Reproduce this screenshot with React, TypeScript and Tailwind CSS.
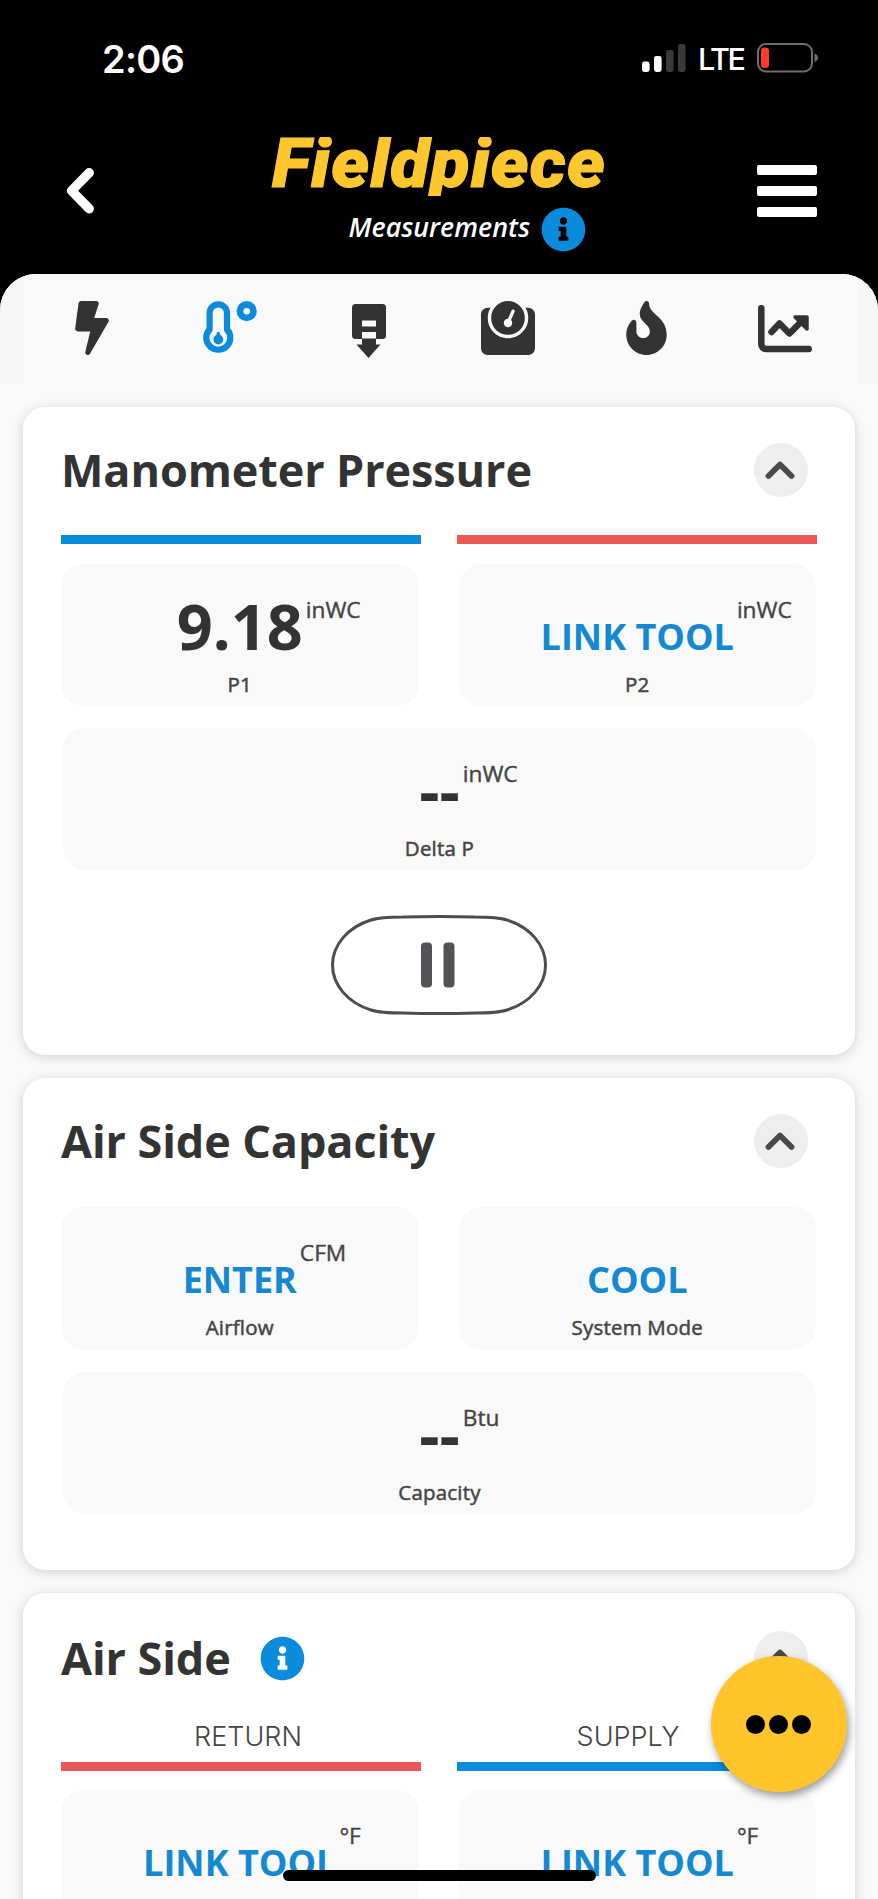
import type React from "react"

import { FaBolt, FaFire, FaInfoCircle, FaWeight } from "react-icons/fa"

interface Reading {
  label?: string
  value: string
  unit?: string
  action?: boolean
}

function StatusBar() {
  return (
    <div className="flex h-[116px] items-center justify-between pl-[102px] pr-[60px] text-white">
      <span className="pt-px font-['Inter',sans-serif] text-[38px] font-semibold leading-none tracking-[-0.8px]">2:06</span>
      <div className="flex items-center">
        <svg width="44" height="29" viewBox="0 0 44 29">
          <rect x="0" y="17.5" width="7.6" height="10.5" rx="2.4" fill="#fff" />
          <rect x="12" y="12" width="7.6" height="16" rx="2.4" fill="#fff" />
          <rect x="24" y="6" width="7.6" height="22" rx="2.4" fill="#3a3a3a" />
          <rect x="36" y="0" width="7.6" height="28" rx="2.4" fill="#3a3a3a" />
        </svg>
        <span className="ml-3 w-[59px] pt-0.5 font-['Inter',sans-serif] text-[30.5px] font-medium leading-none tracking-[-2.4px]">
          LTE
        </span>
        <svg width="61" height="30" viewBox="0 0 61 30">
          <rect x="1" y="1" width="54" height="27.5" rx="8" fill="none" stroke="#6e6e6e" strokeWidth="2" />
          <rect x="4" y="4.5" width="8" height="20.5" rx="3.5" fill="#ff3b30" />
          <path d="M57.5 10.5q3.5 1.5 3.5 4.3t-3.5 4.3z" fill="#6e6e6e" />
        </svg>
      </div>
    </div>
  )
}

function NavBar() {
  return (
    <div className="flex h-[158px] items-start">
      <button className="ml-[66px] mt-[51px]">
        <svg width="29" height="48" viewBox="0 0 29 48">
          <path d="M23.2 5.8 5.6 23.8l17.6 18" fill="none" stroke="#fff" strokeWidth="9.5" strokeLinecap="round" strokeLinejoin="round" />
        </svg>
      </button>
      <div className="ml-[174px] mt-[21px] w-[338px]">
        <svg width="338" height="58" viewBox="0 0 338 58" className="overflow-visible">
          <clipPath id="logo">
            <rect width="342" height="59" />
          </clipPath>
          <text
            x="3"
            y="49.5"
            textLength="334"
            lengthAdjust="spacingAndGlyphs"
            fill="#ffc72e"
            stroke="#ffc72e"
            strokeWidth="1"
            clipPath="url(#logo)"
            className="font-['Roboto',sans-serif] text-[68px] font-black italic tracking-[1px]"
          >
            Fieldpiece
          </text>
        </svg>
        <div className="mt-3 flex h-[45px] items-center justify-end pr-[21px]">
          <span className="pb-1 font-['Open_Sans',sans-serif] text-[26.8px] font-semibold italic leading-none text-white">
            Measurements
          </span>
          <FaInfoCircle className="ml-[11px] size-[45px] text-[#0a8bdc]" />
        </div>
      </div>
      <button className="ml-auto mr-[61px] mt-[49px] flex flex-col gap-[11px]">
        <span className="h-[10px] w-[60px] rounded-[2px] bg-white" />
        <span className="h-[10px] w-[60px] rounded-[2px] bg-white" />
        <span className="h-[10px] w-[60px] rounded-[2px] bg-white" />
      </button>
    </div>
  )
}

function ThermometerIcon() {
  return (
    <svg width="54" height="54" viewBox="0 0 54 54" fill="none" stroke="#0a8bdc">
      <path d="M6.6 12a8.7 8.7 0 0 1 17.4 0v16.5a12 12 0 1 1-17.4 0z" strokeWidth="6.2" />
      <path d="M15.3 32.5v6" strokeWidth="3.4" strokeLinecap="round" />
      <circle cx="15.3" cy="38.5" r="4.9" fill="#0a8bdc" stroke="none" />
      <circle cx="43.7" cy="10.2" r="6.7" strokeWidth="6.8" />
    </svg>
  )
}

function FilterIcon() {
  return (
    <svg width="34" height="54" viewBox="0 0 34 54" fill="#333">
      <path d="M3.5 0h27A3.5 3.5 0 0 1 34 3.5v28a3.5 3.5 0 0 1-3.5 3.5H24V16.5H10V35H3.5A3.5 3.5 0 0 1 0 31.5v-28A3.5 3.5 0 0 1 3.5 0z" />
      <rect x="10" y="22.5" width="14" height="5.5" />
      <path d="M10 34.5h14v6h4.5L16.5 54 4.5 40.5H10z" />
    </svg>
  )
}

function ChartIcon() {
  return (
    <svg width="54" height="48" viewBox="0 0 54 48" fill="none" stroke="#333" strokeWidth="6.5" strokeLinecap="round" strokeLinejoin="round">
      <path d="M3.3 3.3v36a4.7 4.7 0 0 0 4.7 4.7h42.7" />
      <path d="M13.5 27 21.5 18.5 31.5 28.5 43 17" />
      <path d="M37 12h12v12z" fill="#333" strokeWidth="3.5" />
    </svg>
  )
}

function TabBar() {
  return (
    <div className="bg-[#f6f6f6]">
      <div className="ml-6 mr-5 flex h-[110px] items-start bg-[#f9f9f9] pl-[51px] pt-[27px] text-[#333]">
        <FaBolt className="h-[54px] w-[34px]" />
        <div className="ml-[94px]">
          <ThermometerIcon />
        </div>
        <div className="ml-[95px] mt-[3px]">
          <FilterIcon />
        </div>
        <FaWeight className="ml-[95px] size-[54px]" />
        <FaFire className="ml-[91px] h-[54px] w-[41px]" />
        <div className="ml-[91px] mt-1">
          <ChartIcon />
        </div>
      </div>
    </div>
  )
}

function Card({ title, info, children }: { title: string; info?: boolean; children: React.ReactNode }) {
  return (
    <section className="mx-[23px] rounded-[22px] bg-white px-[38px] shadow-[0_2px_12px_rgba(0,0,0,0.16)]">
      <div className={info ? "flex items-center justify-between pr-[9px] pt-[38px]" : "flex items-center justify-between pr-[9px] pt-9"}>
        <div className="flex items-center">
          <h2 className="font-['Open_Sans',sans-serif] text-[45px] font-bold leading-[54px] tracking-[-0.1px] text-[#333]">{title}</h2>
          {info && <FaInfoCircle className="ml-[29px] size-[45px] text-[#0a8bdc]" />}
        </div>
        <button className="flex size-[54px] items-center justify-center rounded-full bg-[#eee]">
          <svg width="32" height="20" viewBox="0 0 32 20">
            <path d="M3.5 16 15 4.5 26.5 16" fill="none" stroke="#4a4a4a" strokeWidth="5.8" strokeLinecap="round" strokeLinejoin="round" />
          </svg>
        </button>
      </div>
      {children}
    </section>
  )
}

function Tile({ label, value, unit, action }: Reading) {
  return (
    <div className="flex h-[142px] flex-col items-center rounded-[22px] bg-[#f9f9f9] font-['Open_Sans',sans-serif]">
      <div className="relative mt-[30px] h-16 text-[63px] font-bold leading-[64px] text-[#333]">
        {action ? <span className="text-[36px] leading-none text-[#1488d0]">{value}</span> : value}
        {unit && (
          <span className="absolute left-full top-1 ml-[3px] text-[22.7px] font-normal leading-6 text-[#444] [-webkit-text-stroke:0.4px_#444]">
            {unit}
          </span>
        )}
      </div>
      {label && (
        <span className="mt-3 text-[20.5px] font-normal leading-7 tracking-[0.2px] text-[#444] [-webkit-text-stroke:0.5px_#444]">
          {label}
        </span>
      )}
    </div>
  )
}

export default function App() {
  return (
    <div className="relative h-[1899px] w-[878px] overflow-hidden bg-black">
      <StatusBar />
      <NavBar />
      <main className="overflow-hidden rounded-t-[36px] bg-[#f9f9f9]">
        <TabBar />

        <div className="flex flex-col gap-[23px] pt-[23px]">
          <Card title="Manometer Pressure">
            <div className="mt-[38px] grid grid-cols-2 gap-9">
              <div className="h-[9px] bg-[#0a8bdc]" />
              <div className="h-[9px] bg-[#e95757]" />
            </div>
            <div className="mt-5 grid grid-cols-2 gap-x-10 gap-y-[22px] pr-px">
              <Tile label="P1" value="9.18" unit="inWC" />
              <Tile label="P2" value="LINK TOOL" unit="inWC" action />
              <div className="col-span-2 ml-0.5">
                <Tile label="Delta P" value="--" unit="inWC" />
              </div>
            </div>
            <div className="flex justify-center pb-10 pt-[45px]">
              <button>
                <svg width="216" height="100" viewBox="0 0 216 100">
                  <path
                    d="M72 2Q90 1.5 108 1.5T144 2C160 2 168 2.3 176 5C199 12 214.500 30 214.500 50S199 88 176 95C168 97.700 160 98 144 98Q126 98.500 108 98.500T72 98C56 98 48 97.700 40 95C17 88 1.500 70 1.500 50S17 12 40 5C48 2.300 56 2 72 2z"
                    fill="#fff"
                    stroke="#4d4d4d"
                    strokeWidth="3"
                  />
                  <rect x="90" y="27.5" width="11" height="45" rx="4" fill="#525257" />
                  <rect x="112.5" y="27.5" width="11" height="45" rx="4" fill="#525257" />
                </svg>
              </button>
            </div>
          </Card>

          <Card title="Air Side Capacity">
            <div className="mt-[39px] grid grid-cols-2 gap-x-10 gap-y-[23px] pb-14 pr-px">
              <Tile label="Airflow" value="ENTER" unit="CFM" action />
              <Tile label="System Mode" value="COOL" action />
              <div className="col-span-2 ml-0.5">
                <Tile label="Capacity" value="--" unit="Btu" />
              </div>
            </div>
          </Card>

          <Card title="Air Side" info>
            <div className="-ml-[3px] mt-[34px] grid w-[760px] grid-cols-2 text-center font-['Inter',sans-serif] text-[27px] font-light leading-[36px] text-[#444]">
              <span>RETURN</span>
              <span>SUPPLY</span>
            </div>
            <div className="mt-[7px] grid grid-cols-2 gap-9">
              <div className="h-[9px] bg-[#e95757]" />
              <div className="h-[9px] bg-[#0a8bdc]" />
            </div>
            <div className="mt-[19px] grid grid-cols-2 gap-x-10 pr-px">
              <Tile value="LINK TOOL" unit="°F" action />
              <Tile value="LINK TOOL" unit="°F" action />
            </div>
          </Card>
        </div>
      </main>

      <button className="absolute bottom-[107px] right-[31px] flex size-[136px] items-center justify-center gap-1 rounded-full bg-[#ffc52a] pr-0.5 shadow-[2px_4px_8px_rgba(0,0,0,0.4)]">
        <span className="size-[19px] rounded-full bg-black" />
        <span className="size-[19px] rounded-full bg-black" />
        <span className="size-[19px] rounded-full bg-black" />
      </button>
      <div className="absolute bottom-[18px] left-[283px] h-[11px] w-[313px] rounded-full bg-black" />
    </div>
  )
}
